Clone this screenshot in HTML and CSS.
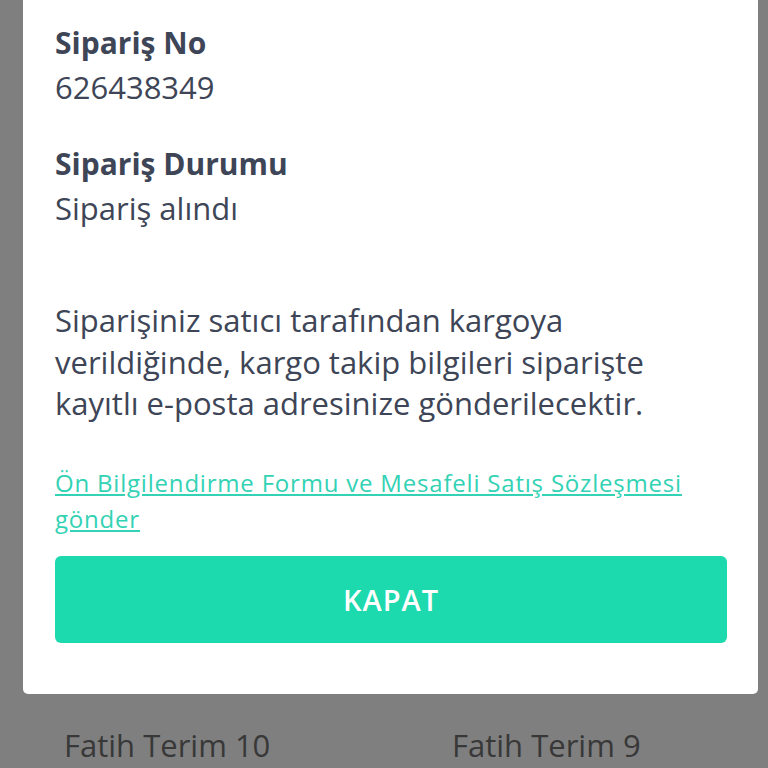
FILE: index.html
```html
<!DOCTYPE html>
<html lang="tr">
<head>
    <meta charset="UTF-8">
    <meta name="viewport" content="width=device-width, initial-scale=1.0">
    <title>Sipariş Detayı</title>
    <link rel="stylesheet" href="styles.css">
</head>
<body>
    <div class="modal">
        <div class="field">
            <div class="label">Sipariş No</div>
            <div class="value">626438349</div>
        </div>
        <div class="field">
            <div class="label">Sipariş Durumu</div>
            <div class="value">Sipariş alındı</div>
        </div>
        <p class="info">Siparişiniz satıcı tarafından kargoya verildiğinde, kargo takip bilgileri siparişte kayıtlı e-posta adresinize gönderilecektir.</p>
        <a class="link" href="#">Ön Bilgilendirme Formu ve Mesafeli Satış Sözleşmesi gönder</a>
        <button class="close-btn">KAPAT</button>
    </div>

    <div class="list">
        <div class="item">Fatih Terim 10</div>
        <div class="item">Fatih Terim 9</div>
    </div>
</body>
</html>
```

FILE: styles.css
```css
body {
    margin: 0;
    height: 768px;
    overflow: hidden;
    background-color: #7f7f7f;
    font-family: "Open Sans", Arial, sans-serif;
}
.modal {
    margin-left: 23px;
    width: 735px;
    box-sizing: border-box;
    background: white;
    border-radius: 0 0 5px 5px;
    padding: 21px 31px 51px 32px;
    display: flex;
    flex-direction: column;
    color: #3d4556;
}
.field {
    line-height: 44px;
    font-size: 31px;
}
.field + .field {
    margin-top: 33px;
}
.label {
    font-weight: 700;
    font-size: 30px;
}
.info {
    margin: 70px 0 0;
    font-size: 31px;
    line-height: 41.5px;
}
.link {
    margin-top: 40px;
    font-size: 24px;
    line-height: 36px;
    letter-spacing: 0.8px;
    color: #33d2b4;
}
.close-btn {
    margin-top: 19px;
    height: 87px;
    border: none;
    border-radius: 6px;
    background-color: #1dd9ae;
    color: white;
    font-family: inherit;
    font-size: 29px;
    font-weight: 600;
    letter-spacing: 1px;
}
.list {
    display: grid;
    grid-template-columns: 388px 1fr;
    padding-left: 64px;
    margin-top: 33px;
}
.item {
    font-size: 31px;
    line-height: 36px;
    color: #383838;
}
```
